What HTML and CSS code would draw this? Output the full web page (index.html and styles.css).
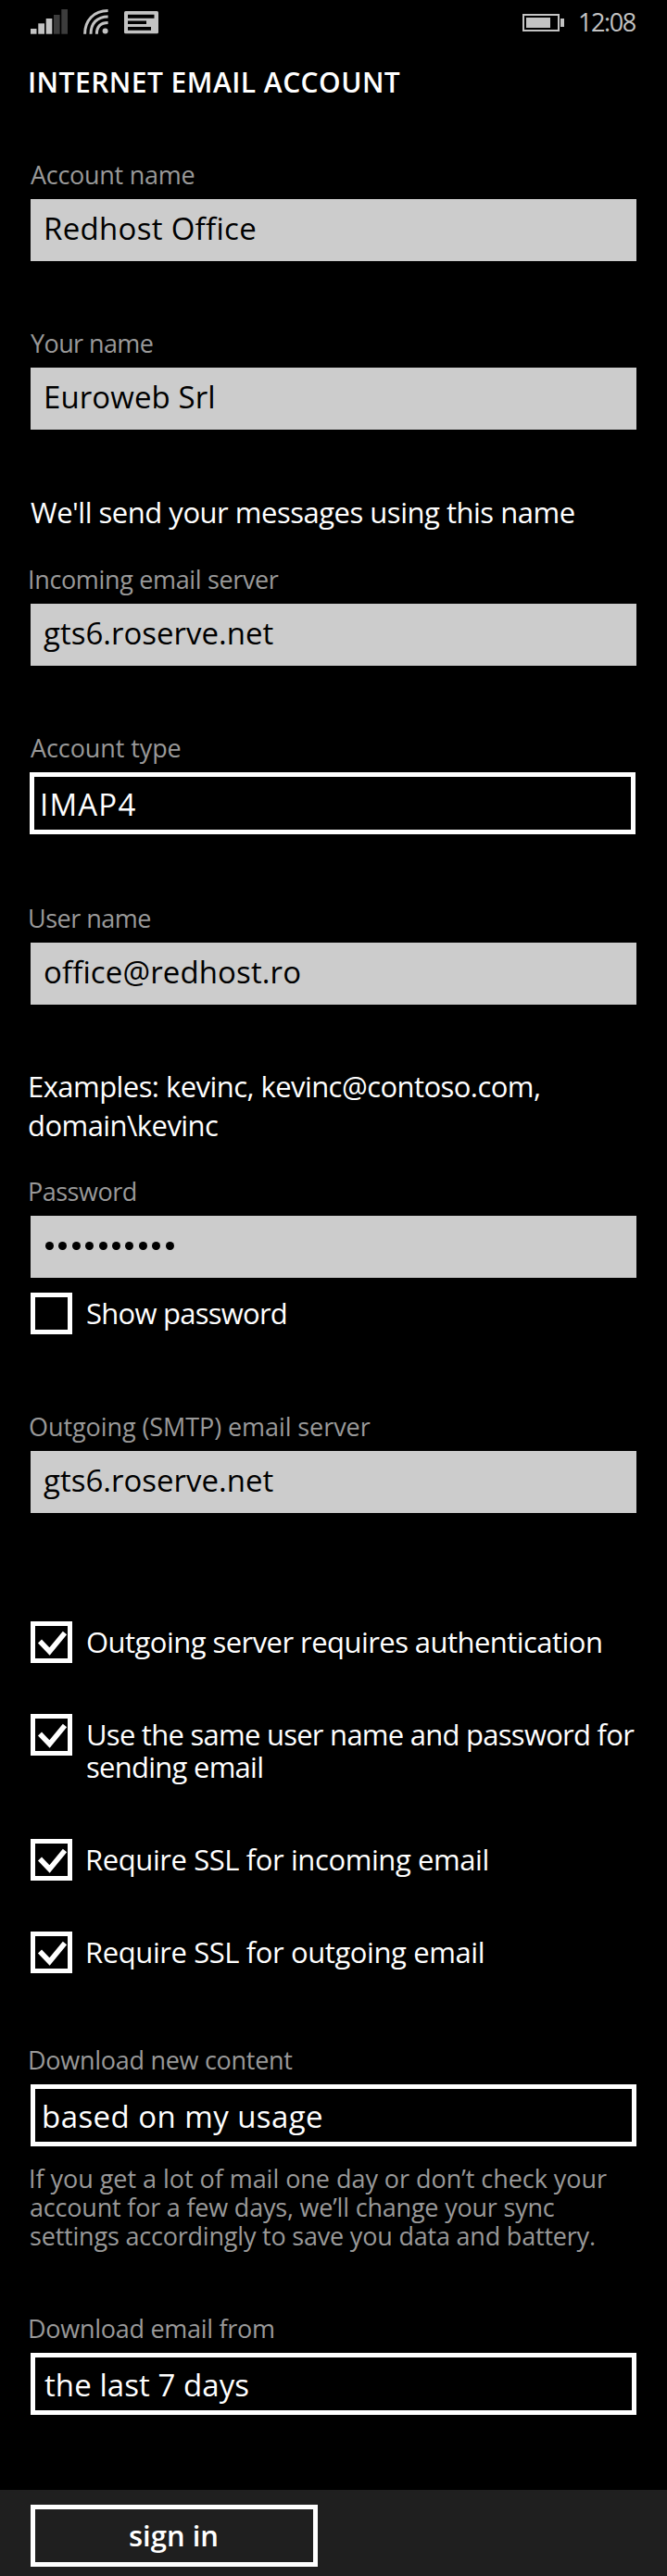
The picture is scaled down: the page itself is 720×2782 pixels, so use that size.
FILE: index.html
```html
<!DOCTYPE html>
<html lang="en">
<head>
<meta charset="utf-8">
<title>Internet email account</title>
<link rel="stylesheet" href="styles.css">
</head>
<body>
<header class="status">
  <svg class="signal" width="40" height="27" viewBox="0 0 40 27">
    <g fill="#c3c3c3"><rect y="21" width="6.5" height="5.7"/><rect x="8.3" y="15.3" width="6.7" height="11.4"/><rect x="16.7" y="10" width="6.6" height="16.7"/></g>
    <g fill="#3c3c3c"><rect x="25" y="6" width="6.6" height="20.7"/><rect x="33.3" width="6.7" height="26.7"/></g>
  </svg>
  <svg class="wifi" width="27" height="27" viewBox="0 0 27 27">
    <g fill="none" stroke="#c3c3c3" stroke-width="3"><path d="M1.6 26.7C1.6 12.5 11 1.6 26.6 1.6"/><path d="M8 26.7C8 15.5 14.5 8 26.6 8"/><path d="M14.4 26.7C14.4 19 18.5 14.4 26.6 14.4"/></g>
    <circle cx="23.6" cy="23.6" r="3" fill="#c3c3c3"/>
  </svg>
  <svg class="message" width="37" height="25" viewBox="0 0 37 25">
    <rect width="37" height="24.3" rx="1.5" fill="#c3c3c3"/>
    <path d="M4 3.8h28.5v4H4zM4 10.5h20v3.4H4zM4 17h25v3.8H4z" fill="#000"/>
  </svg>
  <svg class="battery" width="46" height="20" viewBox="0 0 46 20">
    <rect x="1" y="1" width="38" height="17" fill="none" stroke="#c3c3c3" stroke-width="2"/>
    <path d="M4 4h26v11H4zM41 5h4v9h-4z" fill="#c3c3c3"/>
  </svg>
  <span class="clock">12:08</span>
</header>

<main class="form">
  <h1 class="title">INTERNET EMAIL ACCOUNT</h1>

  <section class="group account-name">
    <div class="label">Account name</div>
    <div class="input">Redhost Office</div>
  </section>
  <section class="group your-name">
    <div class="label">Your name</div>
    <div class="input">Euroweb Srl</div>
  </section>
  <p class="note send-note">We'll send your messages using this name</p>
  <section class="group incoming">
    <div class="label">Incoming email server</div>
    <div class="input">gts6.roserve.net</div>
  </section>
  <section class="group account-type">
    <div class="label">Account type</div>
    <div class="select">IMAP4</div>
  </section>
  <section class="group user-name">
    <div class="label">User name</div>
    <div class="input">office@redhost.ro</div>
  </section>
  <p class="note example-note">Examples: kevinc, kevinc@contoso.com,<br>domain\kevinc</p>
  <section class="group password">
    <div class="label">Password</div>
    <div class="input"><span class="dots"><i></i><i></i><i></i><i></i><i></i><i></i><i></i><i></i><i></i><i></i></span></div>
    <div class="check show"><span class="box"></span><span class="check-text">Show password</span></div>
  </section>
  <section class="group outgoing">
    <div class="label">Outgoing (SMTP) email server</div>
    <div class="input">gts6.roserve.net</div>
  </section>

  <div class="checks">
    <div class="check auth"><span class="box"><svg width="35" height="35" viewBox="0 0 35 35"><path d="M5 16.5L15.5 27.5L32 7.5" class="tick"/></svg></span><span class="check-text">Outgoing server requires authentication</span></div>
    <div class="check same"><span class="box"><svg width="35" height="35" viewBox="0 0 35 35"><path d="M5 16.5L15.5 27.5L32 7.5" class="tick"/></svg></span><span class="check-text">Use the same user name and password for<br>sending email</span></div>
    <div class="check ssl"><span class="box"><svg width="35" height="35" viewBox="0 0 35 35"><path d="M5 16.5L15.5 27.5L32 7.5" class="tick"/></svg></span><span class="check-text">Require SSL for incoming email</span></div>
    <div class="check ssl"><span class="box"><svg width="35" height="35" viewBox="0 0 35 35"><path d="M5 16.5L15.5 27.5L32 7.5" class="tick"/></svg></span><span class="check-text">Require SSL for outgoing email</span></div>
  </div>

  <section class="group download">
    <div class="label">Download new content</div>
    <div class="select">based on my usage</div>
    <p class="help"><span class="first">If you get a lot of mail one day or don’t check your</span><br>account for a few days, we’ll change your sync<br>settings accordingly to save you data and battery.</p>
  </section>
  <section class="group period">
    <div class="label">Download email from</div>
    <div class="select">the last 7 days</div>
  </section>
</main>

<footer class="bar"><button class="sign-in">sign in</button></footer>
</body>
</html>
```
FILE: styles.css
```css
* { box-sizing: border-box; }
body {
  margin: 0;
  width: 720px;
  height: 2782px;
  display: flex;
  flex-direction: column;
  background: #000;
  color: #fff;
  font-family: "Open Sans", "Noto Sans", sans-serif;
  white-space: nowrap;
}
h1, p { margin: 0; }

.status {
  height: 50px;
  flex: none;
  display: flex;
  align-items: flex-start;
  padding: 10px 32px 0 33px;
}
.status svg { flex: none; }
.wifi { margin-left: 17px; }
.message { margin: 2px 0 0 17px; }
.battery { margin: 5px 0 0 auto; }
.clock {
  width: 64px;
  margin-left: 14px;
  font-size: 27px;
  line-height: 27px;
  letter-spacing: -1.4px;
  color: #c3c3c3;
}

.form { flex: none; padding: 0 33px; }
.title {
  padding-top: 18px;
  margin-left: -3px;
  height: 123px;
  font-size: 30px;
  line-height: 41px;
  font-weight: 600;
  letter-spacing: 0.46px;
}

.label {
  height: 30px;
  margin: 0 0 12px -3px;
  font-size: 27px;
  line-height: 32px;
  letter-spacing: -0.28px;
  color: #999;
}
.input, .select {
  width: 654px;
  height: 67px;
  font-size: 33px;
}
.input {
  padding: 0 14px;
  line-height: 64px;
  background: #ccc;
  color: #000;
}
.select {
  padding: 0 8px;
  border: 5px solid #fff;
  line-height: 59px;
}
.note {
  margin-left: -1px;
  font-size: 31px;
  line-height: 42px;
}

.account-name .label { margin-left: 0; }
.account-name .input { letter-spacing: 0.3px; }
.your-name { margin-top: 73px; }
.your-name .label { margin-left: 0; letter-spacing: -0.6px; }
.your-name .input { letter-spacing: 0.1px; }
.send-note { margin: 68px 0 0; letter-spacing: -0.49px; }
.incoming { margin-top: 36px; }
.incoming .label { letter-spacing: -0.35px; }
.account-type { margin-top: 73px; }
.account-type .label { margin-left: 0; letter-spacing: -0.09px; }
.account-type .select { margin-left: -1px; padding-left: 6px; letter-spacing: 1.2px; }
.user-name { margin-top: 75px; }
.user-name .label { letter-spacing: -0.5px; }
.user-name .input { letter-spacing: 0.12px; }
.example-note { margin: 67px 0 35px -3px; letter-spacing: -0.56px; }
.password .label { letter-spacing: -0.5px; }
.outgoing { margin-top: 84px; }
.outgoing .label { margin-left: -2px; letter-spacing: -0.08px; }

.dots { display: flex; gap: 5.4px; padding: 28px 0 0 2px; }
.dots i { width: 9px; height: 9px; border-radius: 50%; background: #000; }

.check { display: flex; gap: 15px; min-height: 45px; }
.box { flex: none; width: 45px; height: 45px; border: 5px solid #fff; }
.box svg { display: block; }
.tick { fill: none; stroke: #fff; stroke-width: 5.6; }
.check-text { padding-top: 5px; font-size: 31px; line-height: 35px; }
.show { margin-top: 16px; }
.show .check-text { letter-spacing: -0.75px; }
.checks { display: flex; flex-direction: column; margin-top: 117px; gap: 55px; }
.auth .check-text { letter-spacing: -0.55px; }
.same { height: 80px; }
.same .check-text { letter-spacing: -0.74px; }
.ssl .check-text { margin-left: -1px; letter-spacing: -0.41px; }

.download { margin-top: 78px; }
.download .select { padding-left: 7px; letter-spacing: 0.44px; }
.help {
  margin: 19px 0 0 -1px;
  font-size: 27px;
  line-height: 31px;
  letter-spacing: -0.2px;
  color: #999;
}
.help .first { margin-left: -1px; letter-spacing: -0.04px; }
.period { margin-top: 69px; }
.period .select { padding-left: 10px; letter-spacing: 0.07px; }

.bar {
  height: 93px;
  flex: none;
  margin-top: auto;
  padding: 16px 33px 0;
  background: #1f1f1f;
}
.sign-in {
  width: 310px;
  height: 67px;
  padding: 0 1px 2px 0;
  border: 5px solid #fff;
  background: none;
  color: #fff;
  font: 600 31px/52px "Open Sans", "Noto Sans", sans-serif;
}
```
